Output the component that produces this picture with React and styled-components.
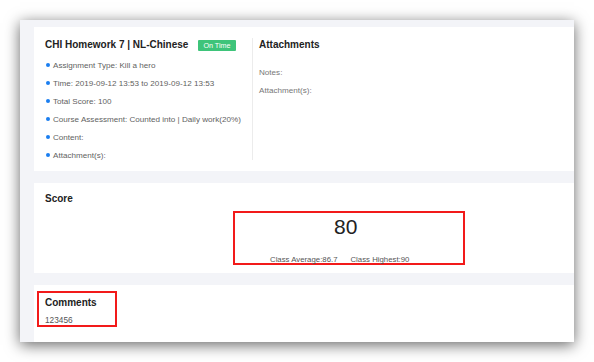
import React from "react";
import styled, { createGlobalStyle } from "styled-components";

const Global = createGlobalStyle`
  html, body { margin: 0; padding: 0; background: #ffffff; }
  body { font-family: "Liberation Sans", Arial, sans-serif; }
`;

const Stage = styled.div`
  width: 594px;
  height: 362px;
  padding: 20px;
  box-sizing: border-box;
  overflow: hidden;
`;

const Window = styled.div`
  width: 554px;
  height: 322px;
  background: #f3f4f8;
  box-shadow: 0 3px 14px rgba(0, 0, 0, 0.6);
  overflow: hidden;
  padding: 7px 0 0 14px;
  box-sizing: border-box;
  display: flex;
  flex-direction: column;
  gap: 12px;
`;

const Card = styled.div`
  background: #ffffff;
  height: ${(p) => p.$h}px;
  flex-shrink: 0;
  box-sizing: border-box;
`;

const InfoCard = styled(Card)`
  display: flex;
  padding: 11px 0 11px 11px;
`;

const LeftCol = styled.div`
  width: 207px;
  border-right: 1px solid #ececec;
  display: flex;
  flex-direction: column;
`;

const RightCol = styled.div`
  flex: 1;
  padding-left: 6px;
  display: flex;
  flex-direction: column;
`;

const TitleRow = styled.div`
  display: flex;
  align-items: center;
  gap: 10px;
  height: 14px;
  margin-bottom: 4px;
  flex-shrink: 0;
`;

const Heading = styled.div`
  font-size: 10px;
  font-weight: bold;
  color: #222;
  line-height: 14px;
`;

const Badge = styled.span`
  background: #3ec47a;
  color: #fff;
  font-size: 7.2px;
  line-height: 11px;
  height: 11px;
  padding: 0 5px;
  border-radius: 1px;
`;

const Item = styled.div`
  display: flex;
  align-items: center;
  height: 18px;
  flex-shrink: 0;
  font-size: 8.1px;
  color: #5f5f5f;
  white-space: nowrap;
  &::before {
    content: "";
    width: 4px;
    height: 4px;
    border-radius: 50%;
    background: #1a7ef0;
    margin: 0 3px 0 1px;
    flex-shrink: 0;
  }
`;

const Field = styled.div`
  font-size: 8.1px;
  color: #777;
  height: 18px;
  line-height: 18px;
  white-space: nowrap;
  flex-shrink: 0;
  margin-top: ${(p) => p.$mt || 0}px;
`;

const ScoreCard = styled(Card)`
  padding: 9px 0 0 11px;
  display: flex;
  flex-direction: column;
`;

const Highlight = styled.div`
  border: 2px solid #f21a1a;
  box-sizing: border-box;
`;

const ScoreBox = styled(Highlight)`
  width: 232px;
  height: 54px;
  margin: 5px 0 0 188px;
  padding-left: 35px;
  display: flex;
  flex-direction: column;
`;

const BigScore = styled.div`
  font-size: 21px;
  color: #222;
  line-height: 22px;
  margin: 3px 0 0 64px;
`;

const Stats = styled.div`
  display: flex;
  gap: 13px;
  font-size: 7.8px;
  color: #555;
  margin-top: 17px;
`;

const CommentsCard = styled(Card)`
  padding: 6px 0 0 3px;
`;

const CommentsBox = styled(Highlight)`
  width: 80px;
  height: 36px;
  padding: 3px 0 0 6px;
`;

const Comment = styled.div`
  font-size: 8.3px;
  color: #555;
  margin-top: 5px;
`;

export default function App() {
  const items = [
    "Assignment Type: Kill a hero",
    "Time: 2019-09-12 13:53 to 2019-09-12 13:53",
    "Total Score: 100",
    "Course Assessment: Counted into | Daily work(20%)",
    "Content:",
    "Attachment(s):",
  ];
  return (
    <>
      <Global />
      <Stage>
        <Window>
          <InfoCard $h={144}>
            <LeftCol>
              <TitleRow>
                <Heading>CHI Homework 7 | NL-Chinese</Heading>
                <Badge>On Time</Badge>
              </TitleRow>
              {items.map((t) => (
                <Item key={t}>{t}</Item>
              ))}
            </LeftCol>
            <RightCol>
              <Heading>Attachments</Heading>
              <Field $mt={12}>Notes:</Field>
              <Field>Attachment(s):</Field>
            </RightCol>
          </InfoCard>
          <ScoreCard $h={90}>
            <Heading>Score</Heading>
            <ScoreBox>
              <BigScore>80</BigScore>
              <Stats>
                <span>Class Average:86.7</span>
                <span>Class Highest:90</span>
              </Stats>
            </ScoreBox>
          </ScoreCard>
          <CommentsCard $h={80}>
            <CommentsBox>
              <Heading>Comments</Heading>
              <Comment>123456</Comment>
            </CommentsBox>
          </CommentsCard>
        </Window>
      </Stage>
    </>
  );
}
